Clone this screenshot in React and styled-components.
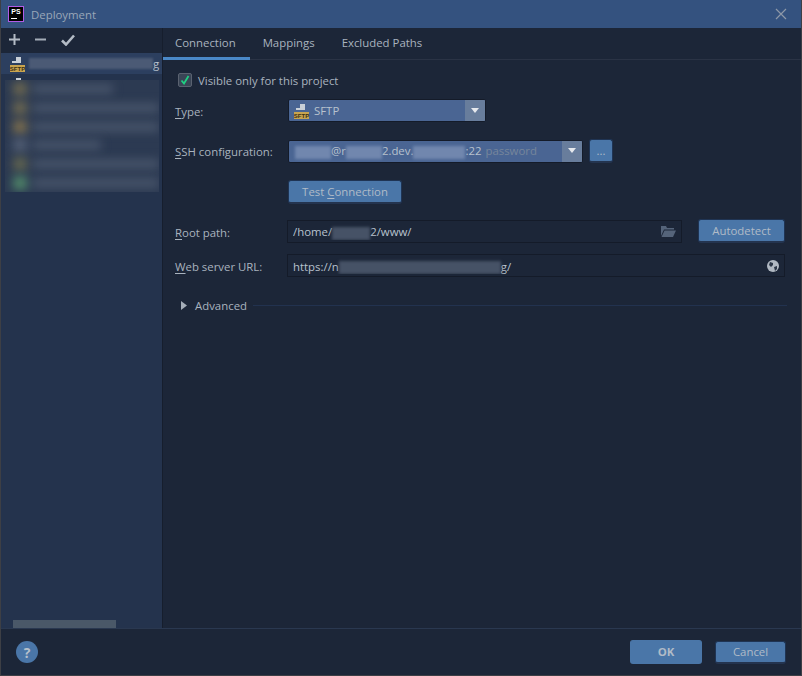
import React from 'react';
import styled, { createGlobalStyle } from 'styled-components';

const GlobalStyle = createGlobalStyle`
  html, body { margin: 0; padding: 0; background: #1c2638; }
  body { font-family: "Open Sans", "Noto Sans", "Liberation Sans", sans-serif; font-size: 11.4px; color: #a9b3bf; }
  u { text-underline-offset: 2px; text-decoration-thickness: 1px; }
`;

const Win = styled.div`
  width: 802px;
  height: 676px;
  box-sizing: border-box;
  border: 1px solid #3d3f45;
  border-top: 0;
  display: flex;
  flex-direction: column;
  background: #1c2638;
  overflow: hidden;
`;

const TitleBar = styled.div`
  height: 28px;
  flex: none;
  background: #34527f;
  display: flex;
  align-items: center;
  padding: 0 14px 0 7px;
  color: #9aa7b8;
`;

const AppLogo = styled.div`
  width: 14px;
  height: 14px;
  box-sizing: content-box;
  border: 1px solid #b05ce6;
  background: #000;
  color: #fff;
  font: bold 7px/9px "Liberation Sans", sans-serif;
  padding: 0;
  position: relative;
  text-align: center;
  margin-right: 7px;
  &::after {
    content: '';
    position: absolute;
    left: 2px;
    bottom: 2px;
    width: 6px;
    height: 1px;
    background: #fff;
  }
`;

const TitleText = styled.div`
  flex: 1;
`;

const Body = styled.div`
  flex: 1;
  display: flex;
  min-height: 0;
`;

const Side = styled.div`
  width: 161px;
  flex: none;
  display: flex;
  flex-direction: column;
  border-right: 1px solid #161e2d;
  position: relative;
`;

const SideTools = styled.div`
  height: 25px;
  flex: none;
  box-sizing: border-box;
  padding: 0 0 2px 8px;
  display: flex;
  align-items: center;
  gap: 15px;
  background: #1c2638;
`;

const SideList = styled.div`
  flex: 1;
  background: #24334d;
  display: flex;
  flex-direction: column;
  position: relative;
`;

const ListRow = styled.div`
  height: 21px;
  flex: none;
  box-sizing: border-box;
  display: flex;
  align-items: center;
  padding-left: 9px;
  gap: 3px;
  color: #b8c2ce;
  background: ${p => (p.$selected ? '#2c3f5f' : 'transparent')};
`;

const RowBlur = styled.div`
  width: 124px;
  height: 11px;
  margin-right: -3px;
  background: #4b5a75;
  filter: blur(1px);
`;

const Smudge = styled.div`
  position: absolute;
  left: 4px;
  top: 27px;
  width: 154px;
  height: 112px;
  background: #2c3a52;
  display: flex;
  flex-direction: column;
  justify-content: space-around;
  overflow: hidden;
`;

const SmudgeRow = styled.div`
  display: flex;
  align-items: center;
  gap: 6px;
  padding-left: 8px;
  filter: blur(5px);
`;

const SmudgeIcon = styled.div`
  width: 14px;
  height: 14px;
  flex: none;
  background: ${p => p.$c};
`;

const SmudgeBar = styled.div`
  height: 10px;
  background: #465369;
`;

const HScroll = styled.div`
  position: absolute;
  left: 12px;
  bottom: 0;
  width: 103px;
  height: 8px;
  background: #4a5868;
`;

const Main = styled.div`
  flex: 1;
  display: flex;
  flex-direction: column;
  min-width: 0;
`;

const Tabs = styled.div`
  height: 32px;
  flex: none;
  box-sizing: border-box;
  display: flex;
  border-bottom: 1px solid #2a3345;
`;

const Tab = styled.div`
  box-sizing: border-box;
  height: 32px;
  padding: 7px 14px 0 12px;
  margin-right: 1px;
  color: #a9b3bf;
  border-bottom: 3px solid ${p => (p.$active ? '#4a88c7' : 'transparent')};
`;

const Form = styled.div`
  padding: 13px 16px 0 12px;
  display: flex;
  flex-direction: column;
`;

const CheckRow = styled.label`
  display: flex;
  align-items: center;
  height: 14px;
  padding-left: 3px;
  gap: 6px;
`;

const CheckBox = styled.div`
  width: 12px;
  height: 12px;
  border: 1px solid #5a6270;
  border-radius: 2px;
  background: #3a4556;
  display: flex;
  align-items: center;
  justify-content: center;
`;

const Row = styled.div`
  display: flex;
  align-items: center;
  margin-top: ${p => p.$top}px;
`;

const Label = styled.div`
  width: 112px;
  flex: none;
  padding-top: ${p => (p.$drop ? 2 : 0)}px;
`;

const Combo = styled.div`
  width: ${p => p.$w}px;
  height: 23px;
  box-sizing: border-box;
  background: #4a6593;
  border: 1px solid #141b29;
  border-radius: 2px;
  margin-left: 1px;
  display: flex;
  align-items: center;
  color: #b8c2ce;
  overflow: hidden;
`;

const ComboText = styled.div`
  flex: 1;
  display: flex;
  align-items: center;
  padding-left: ${p => p.$pad}px;
  gap: 4px;
  white-space: nowrap;
`;

const ComboArrow = styled.div`
  width: 20px;
  height: 100%;
  background: #687d9c;
  display: flex;
  align-items: center;
  justify-content: center;
`;

const Hidden = styled.span`
  display: inline-block;
  width: ${p => p.$w}px;
  height: ${p => p.$h || 13}px;
  background: ${p => p.$c || '#7187ae'};
  filter: blur(1.5px);
  vertical-align: middle;
`;

const Dim = styled.span`
  color: #76859b;
`;

const Btn = styled.div`
  box-sizing: border-box;
  width: ${p => p.$w}px;
  height: ${p => p.$h || 24}px;
  margin-left: ${p => p.$left || 0}px;
  background: #4a76a8;
  border: 1px solid ${p => (p.$bold ? '#4a76a8' : '#1f3454')};
  border-bottom: 2px solid ${p => (p.$bold ? '#4a76a8' : '#24344f')};
  border-radius: 3px;
  color: #b0bbc7;
  font-weight: ${p => (p.$bold ? 700 : 400)};
  display: flex;
  align-items: center;
  justify-content: center;
  flex: none;
`;

const Field = styled.div`
  width: ${p => p.$w}px;
  height: ${p => p.$h}px;
  box-sizing: border-box;
  border: 1px solid #141b29;
  display: flex;
  align-items: center;
  padding: 0 5px 0 5px;
  color: #b8c2ce;
  white-space: nowrap;
  flex: none;
`;

const FieldText = styled.div`
  flex: 1;
  overflow: hidden;
  padding-top: 2px;
`;

const AdvancedRow = styled.div`
  display: flex;
  align-items: center;
  margin-top: 21px;
  padding-left: 6px;
  gap: 8px;
`;

const AdvancedLine = styled.div`
  flex: 1;
  height: 1px;
  background: #22324f;
  margin: 0 -2px 0 -2px;
`;

const Footer = styled.div`
  height: 47px;
  flex: none;
  box-sizing: border-box;
  border-top: 1px solid #2a3850;
  display: flex;
  align-items: center;
  padding: 0 15px 0 15px;
`;

const Help = styled.div`
  width: 22px;
  height: 22px;
  border-radius: 50%;
  background: #4a76a8;
  color: #b6c0cb;
  font-size: 14px;
  font-weight: 700;
  display: flex;
  align-items: center;
  justify-content: center;
  margin-right: auto;
`;

const SftpIcon = () => (
  <svg width="16" height="16" viewBox="0 0 16 16" style={{ flex: 'none' }}>
    <path d="M6 1h5v6H2V5h4z M2 5l4-4" fill="#c9d0d8" />
    <rect x="0" y="9" width="15" height="7" fill="#c9a44f" />
    <text x="7.5" y="15" textAnchor="middle" fontSize="6" fontWeight="700" fontFamily="Liberation Sans, sans-serif" fill="#3a2f14">SFTP</text>
  </svg>
);

const Arrow = () => (
  <svg width="10" height="6" viewBox="0 0 10 6">
    <path d="M1 0h8L5 5z" fill="#e6e9ed" />
  </svg>
);

const App = () => {
  return (
    <>
      <GlobalStyle />
      <Win>
        <TitleBar>
          <AppLogo>PS</AppLogo>
          <TitleText>Deployment</TitleText>
          <svg width="12" height="12" viewBox="0 0 12 12">
            <path d="M1 1l10 10M11 1L1 11" stroke="#8d98a8" strokeWidth="1.2" />
          </svg>
        </TitleBar>
        <Body>
          <Side>
            <SideTools>
              <svg width="11" height="11" viewBox="0 0 11 11">
                <path d="M5.5 0v11M0 5.5h11" stroke="#b4bcc6" strokeWidth="2" />
              </svg>
              <svg width="11" height="11" viewBox="0 0 11 11">
                <path d="M0 5.5h11" stroke="#a4adb8" strokeWidth="2" />
              </svg>
              <svg width="14" height="12" viewBox="0 0 14 12">
                <path d="M1 6.5l4 4L13 1.5" fill="none" stroke="#b4bcc6" strokeWidth="2.6" />
              </svg>
            </SideTools>
            <SideList>
              <ListRow $selected>
                <SftpIcon />
                <RowBlur />
                <span>g</span>
              </ListRow>
              <ListRow>
                <SftpIcon />
              </ListRow>
              <Smudge>
                <SmudgeRow><SmudgeIcon $c="#6a6650" /><SmudgeBar style={{ width: 80 }} /></SmudgeRow>
                <SmudgeRow><SmudgeIcon $c="#6a6650" /><SmudgeBar style={{ width: 130 }} /></SmudgeRow>
                <SmudgeRow><SmudgeIcon $c="#7a6d4e" /><SmudgeBar style={{ width: 130 }} /></SmudgeRow>
                <SmudgeRow><SmudgeIcon $c="#505c72" /><SmudgeBar style={{ width: 68 }} /></SmudgeRow>
                <SmudgeRow><SmudgeIcon $c="#5f6350" /><SmudgeBar style={{ width: 130 }} /></SmudgeRow>
                <SmudgeRow><SmudgeIcon $c="#4f8468" /><SmudgeBar style={{ width: 130 }} /></SmudgeRow>
              </Smudge>
              <HScroll />
            </SideList>
          </Side>
          <Main>
            <Tabs>
              <Tab $active>Connection</Tab>
              <Tab>Mappings</Tab>
              <Tab>Excluded Paths</Tab>
            </Tabs>
            <Form>
              <CheckRow>
                <CheckBox>
                  <svg width="10" height="10" viewBox="0 0 10 10">
                    <path d="M1.5 5.5l2.5 3L8.5 1" fill="none" stroke="#1fd183" strokeWidth="1.8" />
                  </svg>
                </CheckBox>
                Visible only for this project
              </CheckRow>
              <Row $top={12}>
                <Label $drop><u>T</u>ype:</Label>
                <Combo $w={198}>
                  <ComboText $pad={5}><SftpIcon />SFTP</ComboText>
                  <ComboArrow><Arrow /></ComboArrow>
                </Combo>
              </Row>
              <Row $top={17}>
                <Label><u>S</u>SH configuration:</Label>
                <Combo $w={295}>
                  <ComboText $pad={6}>
                    <span>
                      <Hidden $w={36} />@r<Hidden $w={36} />2.dev.<Hidden $w={52} />:22
                    </span>
                    <Dim>password</Dim>
                  </ComboText>
                  <ComboArrow><Arrow /></ComboArrow>
                </Combo>
                <Btn $w={24} $left={6}>...</Btn>
              </Row>
              <Row $top={17}>
                <Label />
                <Btn $w={114} $left={1}><span>Test <u>C</u>onnection</span></Btn>
              </Row>
              <Row $top={15}>
                <Label $drop><u>R</u>oot path:</Label>
                <Field $w={395} $h={23}>
                  <FieldText>/home/<Hidden $w={38} $c="#465266" />2/www/</FieldText>
                  <svg width="15" height="11" viewBox="0 0 15 11">
                    <path d="M0 0h5l1 2h7v1.5H3L0 10z M3.5 4.5H15L12 11H0.5z" fill="#55647a" />
                  </svg>
                </Field>
                <Btn $w={87} $left={16}>Autodetect</Btn>
              </Row>
              <Row $top={11}>
                <Label $drop><u>W</u>eb server URL:</Label>
                <Field $w={498} $h={23}>
                  <FieldText>https://n<Hidden $w={162} $c="#465266" />g/</FieldText>
                  <svg width="12" height="12" viewBox="0 0 12 12">
                    <circle cx="6" cy="6" r="6" fill="#b0b8c2" />
                    <path d="M3 2l3 1 0 2-2 2-2-2zM7 7l3-1 0 3-2 2z" fill="#2b3647" />
                  </svg>
                </Field>
              </Row>
              <AdvancedRow>
                <svg width="6" height="9" viewBox="0 0 6 9">
                  <path d="M0 0l6 4.5L0 9z" fill="#a4adb8" />
                </svg>
                Advanced
                <AdvancedLine />
              </AdvancedRow>
            </Form>
          </Main>
        </Body>
        <Footer>
          <Help>?</Help>
          <Btn $w={72} $bold>OK</Btn>
          <Btn $w={71} $h={23} $left={13}>Cancel</Btn>
        </Footer>
      </Win>
    </>
  );
};

export default App;
